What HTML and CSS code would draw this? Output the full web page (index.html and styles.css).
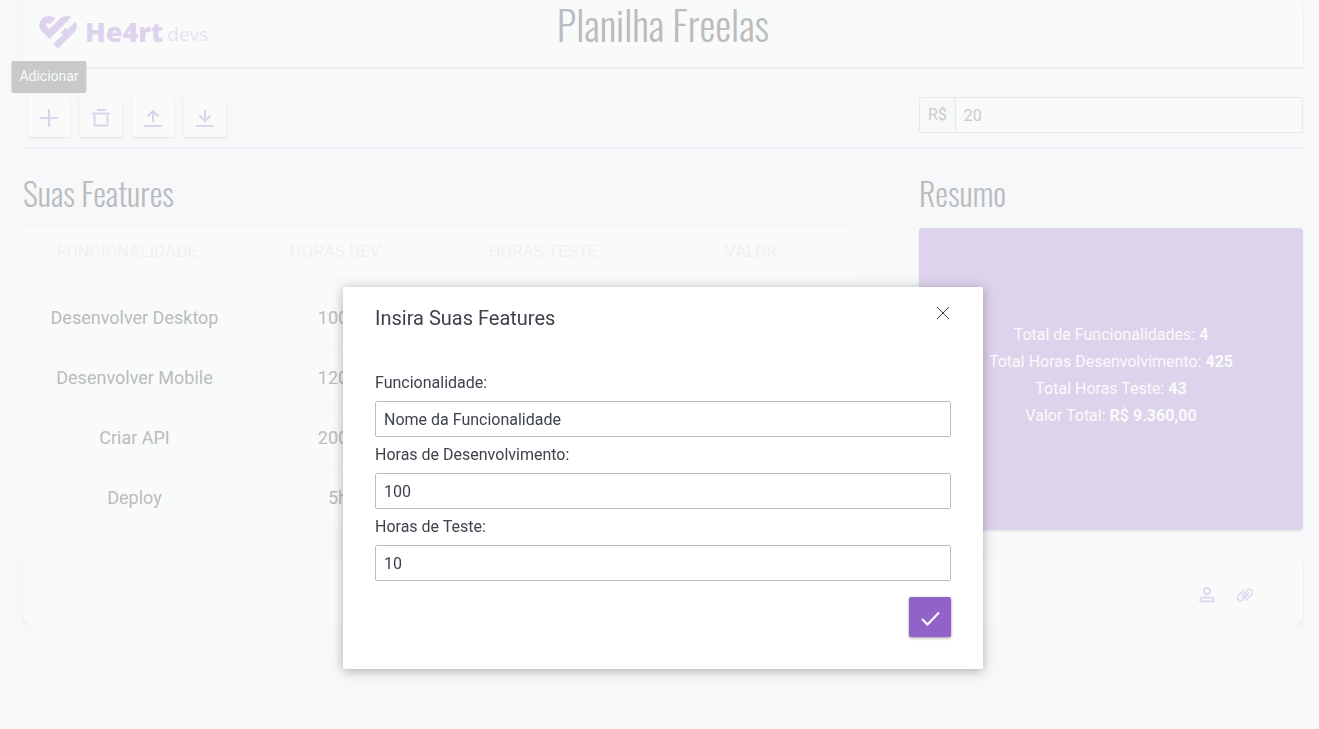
FILE: index.html
```html
<!DOCTYPE html>
<html lang="pt-BR">
<head>
<meta charset="utf-8">
<title>Planilha Freelas</title>
<link rel="stylesheet" href="styles.css">
</head>
<body>
<div class="page">
  <header class="topbar">
    <a class="brand" href="#" aria-label="He4rt devs">
      <svg class="brand-mark" viewBox="0 0 38 32" aria-hidden="true">
        <path d="M16.500 2.200C12.500-.7 6.500-.8 3 3C-.7 7-.7 12 3 15.500L10.500 23L32.500 1C29-.6 24-.5 21 2.500L10.500 13L7.800 10.500C6 8.500 8.500 6 10.500 7.800L11 8.200Z"/>
        <path d="M36.800 5.500L28.500 13.500L26.500 12L22 16.500L24 18.500L14 28L19 32.500L35.500 16C38 13 38.500 9 36.800 5.500Z"/>
      </svg>
      <span class="brand-name">He4rt</span><span class="brand-sub">devs</span>
    </a>
    <h1 class="title">Planilha Freelas</h1>
  </header>

  <div class="toolbar">
    <div class="actions">
      <div class="action">
        <button class="tool" type="button" aria-label="Adicionar" aria-describedby="tip"><svg viewBox="0 0 24 24"><path d="M12 3v18M3 12h18"/></svg></button>
        <span class="tooltip" role="tooltip" id="tip">Adicionar</span>
      </div>
      <button class="tool" type="button" aria-label="Remover"><svg viewBox="0 0 24 24"><path d="M8 4h9M3 7.500h18M5.500 8v10.500a1 1 0 0 0 1 1h11a1 1 0 0 0 1-1V8"/></svg></button>
      <button class="tool" type="button" aria-label="Enviar"><svg viewBox="0 0 24 24"><path d="M12 16V5M6.500 10.500L12 5l5.500 5.500M3 20h18"/></svg></button>
      <button class="tool" type="button" aria-label="Baixar"><svg viewBox="0 0 24 24"><path d="M12 4v11M6.500 9.500L12 15l5.500-5.500M3 20h18"/></svg></button>
    </div>
    <div class="rate">
      <label class="rate-label" for="rate">R$</label>
      <input class="rate-input" id="rate" type="text" value="20">
    </div>
  </div>

  <main class="content">
    <section class="features">
      <h2 class="heading">Suas Features</h2>
      <table class="table">
        <thead>
          <tr><th>FUNCIONALIDADE</th><th>HORAS DEV</th><th>HORAS TESTE</th><th>VALOR</th></tr>
        </thead>
        <tbody>
          <tr><td>Desenvolver Desktop</td><td>100h</td><td></td><td></td></tr>
          <tr><td>Desenvolver Mobile</td><td>120h</td><td></td><td></td></tr>
          <tr><td>Criar API</td><td>200h</td><td></td><td></td></tr>
          <tr><td>Deploy</td><td>5h</td><td></td><td></td></tr>
        </tbody>
      </table>
    </section>
    <section class="summary">
      <h2 class="heading">Resumo</h2>
      <div class="summary-card">
        <p>Total de Funcionalidades: <strong>4</strong></p>
        <p>Total Horas Desenvolvimento: <strong>425</strong></p>
        <p>Total Horas Teste: <strong>43</strong></p>
        <p>Valor Total: <strong>R$ 9.360,00</strong></p>
      </div>
    </section>
  </main>

  <footer class="footer">
    <a href="#" aria-label="Perfil"><svg viewBox="0 0 18 18"><circle cx="9" cy="5" r="3"/><path d="M2.500 15.500v-1.500c0-1.500 1-2.500 2.500-2.500h8c1.500 0 2.500 1 2.500 2.500v1.500z"/></svg></a>
    <a href="#" aria-label="Links"><svg class="clip" viewBox="0 0 18 18"><path d="M8.500 3.500L3 8.500C-.3 11.800 3.200 17 7 13.500L13 7.800M9.500 14.500L15 9.500C18.300 6.200 14.800 1 11 4.500L5 10.200M6.500 12L13 6"/></svg></a>
  </footer>
</div>

<div class="overlay">
  <form class="modal" role="dialog" aria-labelledby="modal-title">
    <div class="modal-head">
      <h2 class="modal-title" id="modal-title">Insira Suas Features</h2>
      <button class="close" type="button" aria-label="Fechar"><svg viewBox="0 0 16 16"><path d="M2 2l12 12M14 2L2 14"/></svg></button>
    </div>
    <label class="label" for="name">Funcionalidade:</label>
    <input class="field" id="name" type="text" value="Nome da Funcionalidade">
    <label class="label" for="dev">Horas de Desenvolvimento:</label>
    <input class="field" id="dev" type="text" value="100">
    <label class="label" for="test">Horas de Teste:</label>
    <input class="field" id="test" type="text" value="10">
    <button class="confirm" type="button" aria-label="Confirmar"><svg viewBox="0 0 24 24"><path d="M4 13l5.500 5.500L21 6.500"/></svg></button>
  </form>
</div>
</body>
</html>
```
FILE: styles.css
```css
* { box-sizing: border-box; }
body { margin: 0; background: #f7f8fa; color: #babcbe; font: 16px/24px Roboto, sans-serif; }
h1, h2, p { margin: 0; font-weight: 400; }
button, input { font: inherit; color: inherit; }
svg { display: block; fill: none; stroke: currentColor; stroke-width: 2; }
.page { padding: 0 16px 0 23px; }

.topbar { display: grid; grid-template-columns: 1fr auto 1fr; align-items: start; height: 67px; padding: 0 16px; background: #f9fbfa; border-radius: 8px 8px 0 0; box-shadow: 0 1px 2px #dfe1e2; }
.brand { display: flex; align-items: center; height: 64px; color: #ddd3ec; text-decoration: none; }
.brand-mark { width: 38px; height: 32px; overflow: visible; fill: currentColor; stroke: none; }
.brand-name { margin-left: 8px; font: 900 27px/40px "Open Sans", sans-serif; }
.brand-sub { margin-left: 4px; padding-top: 4px; color: #e9e1f3; font: 400 19px/32px "Open Sans", sans-serif; }
.title, .heading { font-family: Oswald, "Roboto Condensed", "Liberation Sans Narrow", sans-serif; font-weight: 300; }
.title { font-size: 40px; line-height: 48px; }

.toolbar { display: grid; grid-template-columns: 65fr 30fr; column-gap: 5%; padding: 30px 0 10px; border-bottom: 2px solid #eeeff2; }
.actions { display: flex; gap: 10px; padding-left: 5px; height: 40px; }
.action { position: relative; }
.tool { display: grid; place-items: center; width: 42px; height: 40px; padding: 2px 0 0; border: 0; border-radius: 2px; background: #f9fbfa; color: #ddd3ec; box-shadow: 0 1px 2px #dfe1e2; }
.tool svg { width: 24px; height: 24px; }
.tooltip { position: absolute; bottom: 44px; left: 50%; transform: translateX(-50%); padding: 3px 8px 5px; border-radius: 2px; background: #c7c9cb; color: #f9fbfa; font-size: 14px; line-height: 24px; }
.rate { display: flex; height: 36px; border: 1px solid #e7e8ea; border-radius: 2px; overflow: hidden; }
.rate-label { padding: 0 8px; border-right: 1px solid #e7e8ea; line-height: 34px; color: #c9cbce; }
.rate-input { flex: 1; min-width: 0; padding: 2px 8px 0; border: 0; background: #f9fbfa; color: #c9cbce; }

.content { display: grid; grid-template-columns: 65fr 30fr; column-gap: 5%; padding-top: 16px; }
.heading { font-size: 32px; line-height: 56px; margin-bottom: 7px; }
.summary { display: flex; flex-direction: column; }
.table { display: block; }
.table thead, .table tbody { display: block; }
.table tr { display: grid; background: #f9fbfa; text-align: center; }
.table th, .table td { padding: 0; }
.table thead tr { grid-template-columns: repeat(4, 1fr); margin-bottom: 15px; }
.table th { color: #f0f0f4; font-weight: 400; font-size: 17px; line-height: 47px; }
.table tbody { display: grid; gap: 4px; padding-bottom: 4px; }
.table tbody tr { grid-template-columns: 223fr 184fr 208fr 217fr; border-radius: 4px; }
.table td { font-size: 18px; line-height: 56px; }
.summary-card { display: flex; flex: 1; flex-direction: column; justify-content: center; padding-bottom: 8px; border-radius: 4px; background: #ddd3ec; color: #f9fbfa; text-align: center; line-height: 27px; box-shadow: 0 1px 2px #dfe1e2; }

.footer { display: flex; justify-content: flex-end; align-items: center; gap: 20px; height: 65px; margin-top: 30px; padding: 4px 49px 0 0; background: #f9fbfa; border-radius: 0 0 8px 8px; box-shadow: 0 1px 2px #dfe1e2; }
.footer a { color: #ddd9f0; }
.footer svg { width: 18px; height: 18px; }
.footer .clip { stroke-width: 1.5; }

.overlay { position: fixed; inset: 0; display: flex; justify-content: center; align-items: flex-start; padding: 287px 0 0 7px; }
.modal { display: flex; flex-direction: column; width: 100%; max-width: 640px; padding: 16px 32px 32px; border-radius: 2px; background: #fff; color: #3d424d; box-shadow: 0 2px 12px rgba(0, 0, 0, .3); }
.modal-head { display: flex; justify-content: space-between; align-items: flex-start; height: 64px; }
.modal-title { font-size: 20px; line-height: 30px; }
.close { padding: 2px 0; border: 0; background: none; }
.close svg { width: 16px; height: 16px; stroke-width: 1; }
.label { line-height: 32px; }
.field { height: 36px; margin: 2px 0; padding: 0 8px; border: 1px solid #b8bcc9; border-radius: 2px; background: #fff; }
.confirm { display: grid; place-items: center; align-self: flex-end; width: 42px; height: 40px; margin-top: 14px; padding: 2px 0 0; border: 0; border-radius: 2px; background: #9162c8; color: #fff; box-shadow: 0 1px 3px rgba(0, 0, 0, .4); }
.confirm svg { width: 24px; height: 24px; }
```
